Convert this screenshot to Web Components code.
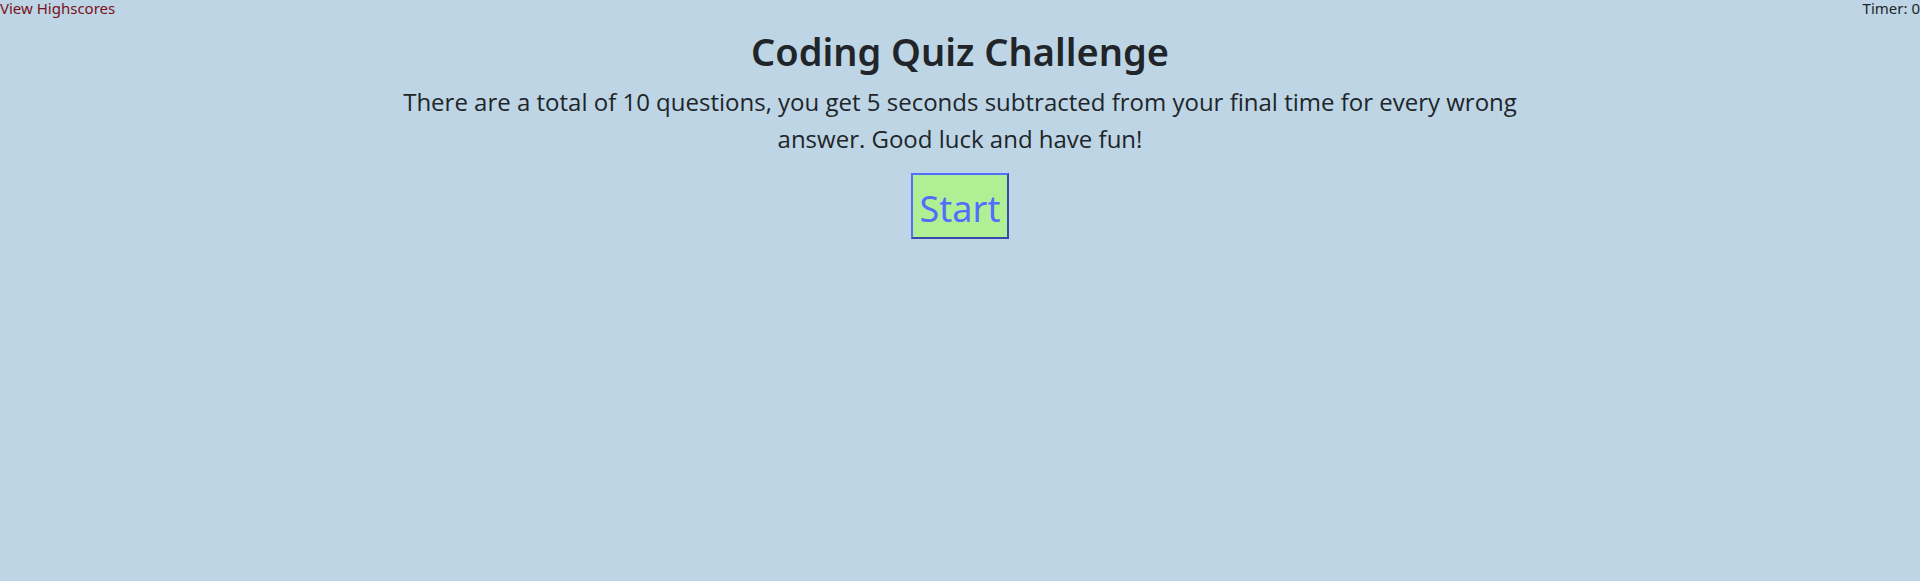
<!DOCTYPE html>
<html lang="en">
<head>
<meta charset="utf-8">
<title>Coding Quiz Challenge</title>
<style>
body { margin: 0; min-height: 100vh; background: #bdd5e4; color: #212529; font: 16px/24px "Noto Sans", sans-serif; }
</style>
</head>
<body>
<quiz-header>
  <span slot="timer">Timer: 0</span>
</quiz-header>
<quiz-intro>
  <span slot="title">Coding Quiz Challenge</span>
  There are a total of 10 questions, you get 5 seconds subtracted from your final time for every wrong answer. Good luck and have fun!
  <start-button slot="action">Start</start-button>
</quiz-intro>
<script>
const define = (name, markup) => customElements.define(name, class extends HTMLElement {
  constructor() {
    super();
    this.attachShadow({ mode: "open" }).innerHTML = markup;
  }
});

define("quiz-header", `
  <style>
    :host { display: flex; justify-content: space-between; font-size: 15px; line-height: 16px; }
    a { color: #7a1018; text-decoration: none; }
  </style>
  <a href="#highscores">View Highscores</a>
  <slot name="timer"></slot>`);

define("quiz-intro", `
  <style>
    :host { display: block; text-align: center; padding-top: 12px; }
    h1 { margin: 0 0 9px; font-size: 38px; line-height: 46px; font-weight: 600; }
    p { max-width: 1140px; margin: 0 auto 16px; font-family: "Open Sans", sans-serif; font-size: 24px; line-height: 37px; }
  </style>
  <h1><slot name="title"></slot></h1>
  <p><slot></slot></p>
  <slot name="action"></slot>`);

define("start-button", `
  <style>
    :host { display: block; }
    button { padding: 7px 7px 1px; border: 2px outset #536dfe; background: #b0f094; color: #536dfe; font: inherit; font-size: 36px; line-height: 54px; }
  </style>
  <button type="button"><slot></slot></button>`);
</script>
</body>
</html>
